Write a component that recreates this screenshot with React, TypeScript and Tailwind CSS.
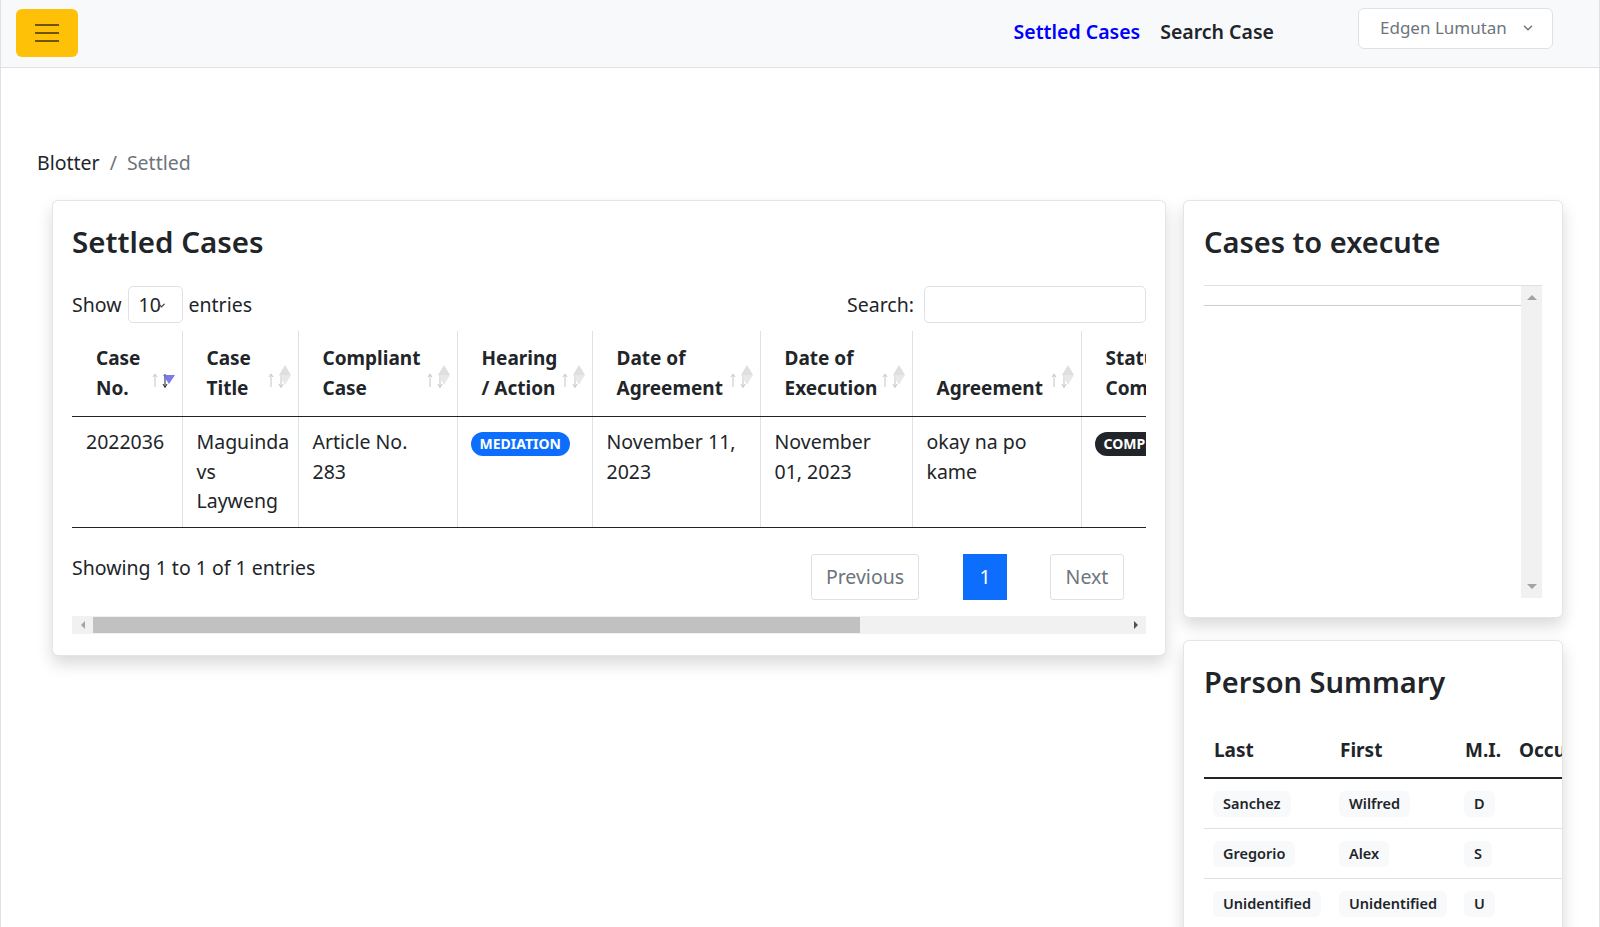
import React from "react";
import { ChevronDown } from "lucide-react";

function SortIcon({ active }: { active?: boolean }) {
  return (
    <svg
      width="24"
      height="26"
      viewBox="0 0 24 26"
      className="absolute right-[6px] bottom-[27px]"
    >
      {/* up arrow */}
      <line x1="3" y1="12" x2="3" y2="24" stroke="#c4c4c4" strokeWidth="1" />
      <path d="M1 14 L3 11 L5 14" fill="none" stroke="#c4c4c4" strokeWidth="1" />
      {/* down arrow */}
      <line x1="13" y1="11" x2="13" y2="24" stroke={active ? "#222" : "#c4c4c4"} strokeWidth="1" />
      <path d="M11 21 L13 24.5 L15 21" fill="none" stroke={active ? "#222" : "#c4c4c4"} strokeWidth="1" />
      {active ? (
        <path d="M11 12 L23 12 L17 21 Z" fill="#6b6be8" opacity="0.9" />
      ) : (
        <>
          <path d="M17 2 L23 12 L11 12 Z" fill="#dcdcdc" opacity="0.9" />
          <path d="M11 12 L23 12 L17 22 Z" fill="#e6e6e6" opacity="0.9" />
        </>
      )}
    </svg>
  );
}

const persons = [
  { last: "Sanchez", first: "Wilfred", mi: "D" },
  { last: "Gregorio", first: "Alex", mi: "S" },
  { last: "Unidentified", first: "Unidentified", mi: "U" },
];

export default function App() {
  return (
    <div className="min-h-screen bg-white border-x border-[#dee2e6] text-[#212529] font-['Noto_Sans',sans-serif]">
      {/* NAVBAR */}
      <nav className="h-[68px] bg-[#f8f9fa] border-b border-[#dee2e6] flex items-center pl-[15px] pr-[46px]">
        <button className="w-[62px] h-[48px] -mt-[2px] bg-[#ffc107] rounded-[6px] flex flex-col items-center justify-center gap-[6px]">
          <span className="block w-[24px] h-[2px] bg-[#705500]" />
          <span className="block w-[24px] h-[2px] bg-[#705500]" />
          <span className="block w-[24px] h-[2px] bg-[#705500]" />
        </button>
        <div className="ml-auto flex items-center">
          <a className="text-[19.5px] font-semibold text-[#0000ff] -mt-[3px]">Settled Cases</a>
          <a className="ml-[20px] text-[19.5px] font-semibold text-[#212529] -mt-[3px]">Search Case</a>
          <button className="ml-[84px] -mt-[11px] w-[195px] h-[41px] bg-white border border-[#dee2e6] rounded-[6px] flex items-center pl-[21px] text-[17px] text-[#6c757d]">
            Edgen Lumutan
            <ChevronDown className="ml-[14px] w-[14px] h-[14px]" strokeWidth={2.5} />
          </button>
        </div>
      </nav>

      <main className="pl-[36px] pr-[36px] pt-[81px]">
        {/* Breadcrumb */}
        <div className="h-[28px] leading-[28px] text-[19.5px] flex items-center">
          <span className="text-[#212529]">Blotter</span>
          <span className="mx-[10px] text-[#6c757d]">/</span>
          <span className="text-[#6c757d]">Settled</span>
        </div>

        <div className="mt-[23px] flex items-start gap-[17px]">
          {/* MAIN CARD */}
          <div className="ml-[15px] w-[1114px] bg-white border border-black/10 rounded-[6px] shadow-[0_0.5rem_1rem_rgba(0,0,0,0.15)] pt-[21px] px-[19px] pb-[21px]">
            <h3 className="h-[40px] leading-[40px] text-[29.5px] font-semibold">Settled Cases</h3>

            <div className="mt-[24px] h-[37px] flex items-center justify-between text-[19.5px]">
              <div className="flex items-center">
                <span>Show</span>
                <div className="ml-[6px] w-[55px] h-[37px] border border-[#dee2e6] rounded-[5px] flex items-center pl-[10px] relative">
                  <span>10</span>
                  <ChevronDown className="absolute left-[27px] top-[13px] w-[11px] h-[11px] text-[#444]" strokeWidth={3} />
                </div>
                <span className="ml-[6px]">entries</span>
              </div>
              <div className="flex items-center">
                <span>Search:</span>
                <div className="ml-[10px] w-[222px] h-[37px] border border-[#dee2e6] rounded-[5px]" />
              </div>
            </div>

            {/* TABLE */}
            <div className="mt-[8px] overflow-hidden">
              <table className="table-fixed border-collapse w-[1149px]">
                <colgroup>
                  <col className="w-[110px]" />
                  <col className="w-[116px]" />
                  <col className="w-[159px]" />
                  <col className="w-[135px]" />
                  <col className="w-[168px]" />
                  <col className="w-[152px]" />
                  <col className="w-[169px]" />
                  <col className="w-[140px]" />
                </colgroup>
                <thead>
                  <tr className="font-bold text-[19px] leading-[30px] text-left">
                    <th className="relative align-bottom pl-[24px] pr-[28px] pt-[12px] pb-[13px] border-b border-b-[#222]">
                      Case<br />No.
                      <SortIcon active />
                    </th>
                    <th className="relative align-bottom pl-[24px] pr-[28px] pt-[12px] pb-[13px] border-b border-b-[#222] border-l border-l-[#dee2e6]">
                      Case<br />Title
                      <SortIcon />
                    </th>
                    <th className="relative align-bottom pl-[24px] pr-[28px] pt-[12px] pb-[13px] border-b border-b-[#222] border-l border-l-[#dee2e6]">
                      Compliant<br />Case
                      <SortIcon />
                    </th>
                    <th className="relative align-bottom pl-[24px] pr-[28px] pt-[12px] pb-[13px] border-b border-b-[#222] border-l border-l-[#dee2e6]">
                      Hearing<br />/ Action
                      <SortIcon />
                    </th>
                    <th className="relative align-bottom pl-[24px] pr-[28px] pt-[12px] pb-[13px] border-b border-b-[#222] border-l border-l-[#dee2e6]">
                      Date of<br />Agreement
                      <SortIcon />
                    </th>
                    <th className="relative align-bottom pl-[24px] pr-[28px] pt-[12px] pb-[13px] border-b border-b-[#222] border-l border-l-[#dee2e6]">
                      Date of<br />Execution
                      <SortIcon />
                    </th>
                    <th className="relative align-bottom pl-[24px] pr-[28px] pt-[12px] pb-[13px] border-b border-b-[#222] border-l border-l-[#dee2e6]">
                      Agreement
                      <SortIcon />
                    </th>
                    <th className="relative align-bottom pl-[24px] pr-[28px] pt-[12px] pb-[13px] border-b border-b-[#222] border-l border-l-[#dee2e6] whitespace-nowrap">
                      Status<br />Compliance
                    </th>
                  </tr>
                </thead>
                <tbody>
                  <tr className="text-[19.5px] leading-[29.5px] text-left align-top">
                    <td className="pl-[14px] pr-[6px] pt-[10px] pb-[11px] border-b border-b-[#222]">2022036</td>
                    <td className="pl-[14px] pr-[6px] pt-[10px] pb-[11px] border-b border-b-[#222] border-l border-l-[#dee2e6] whitespace-nowrap">
                      Maguinda<br />vs<br />Layweng
                    </td>
                    <td className="pl-[14px] pr-[6px] pt-[10px] pb-[11px] border-b border-b-[#222] border-l border-l-[#dee2e6]">
                      Article No.<br />283
                    </td>
                    <td className="pl-[13px] pr-[6px] pt-[10px] pb-[11px] border-b border-b-[#222] border-l border-l-[#dee2e6]">
                      <span className="inline-flex items-center h-[24px] px-[9px] mt-[5px] rounded-full bg-[#0d6efd] text-white text-[14px] font-bold leading-none">
                        MEDIATION
                      </span>
                    </td>
                    <td className="pl-[14px] pr-[6px] pt-[10px] pb-[11px] border-b border-b-[#222] border-l border-l-[#dee2e6] whitespace-nowrap">
                      November 11,<br />2023
                    </td>
                    <td className="pl-[14px] pr-[6px] pt-[10px] pb-[11px] border-b border-b-[#222] border-l border-l-[#dee2e6] whitespace-nowrap">
                      November<br />01, 2023
                    </td>
                    <td className="pl-[14px] pr-[6px] pt-[10px] pb-[11px] border-b border-b-[#222] border-l border-l-[#dee2e6]">
                      okay na po<br />kame
                    </td>
                    <td className="pl-[13px] pr-[6px] pt-[10px] pb-[11px] border-b border-b-[#222] border-l border-l-[#dee2e6] whitespace-nowrap">
                      <span className="inline-flex items-center h-[24px] px-[9px] mt-[5px] rounded-full bg-[#212529] text-white text-[14px] font-bold leading-none">
                        COMPLETED
                      </span>
                    </td>
                  </tr>
                </tbody>
              </table>
            </div>

            {/* FOOTER */}
            <div className="mt-[26px] flex items-start text-[19.5px] pr-[22px]">
              <div className="leading-[28px]">Showing 1 to 1 of 1 entries</div>
              <div className="ml-auto flex items-center">
                <button className="w-[108px] h-[46px] border border-[#dee2e6] rounded-[3px] text-[#6c757d] bg-white">Previous</button>
                <button className="ml-[44px] w-[44px] h-[46px] bg-[#0d6efd] text-white">1</button>
                <button className="ml-[43px] w-[74px] h-[46px] border border-[#dee2e6] rounded-[3px] text-[#6c757d] bg-white">Next</button>
              </div>
            </div>

            {/* horizontal scrollbar */}
            <div className="mt-[16px] h-[18px] bg-[#f1f1f1] flex items-center">
              <div className="w-[21px] flex justify-center">
                <div className="w-0 h-0 border-y-[4px] border-y-transparent border-r-[4px] border-r-[#a3a3a3]" />
              </div>
              <div className="w-[767px] h-[16px] bg-[#c1c1c1]" />
              <div className="ml-auto w-[21px] flex justify-center">
                <div className="w-0 h-0 border-y-[4px] border-y-transparent border-l-[4px] border-l-[#505050]" />
              </div>
            </div>
          </div>

          {/* RIGHT COLUMN */}
          <div className="w-[380px] flex flex-col gap-[22px]">
            <div className="bg-white border border-black/10 rounded-[6px] shadow-[0_0.5rem_1rem_rgba(0,0,0,0.15)] pt-[21px] px-[20px] pb-[19px]">
              <h3 className="h-[40px] leading-[40px] text-[29px] font-semibold">Cases to execute</h3>
              <div className="mt-[23px] h-[313px] border-t border-[#dee2e6] flex">
                <div className="flex-1">
                  <div className="h-[20px] border-b border-[#cccccc]" />
                </div>
                <div className="w-[21px] bg-[#f1f1f1] flex flex-col items-center justify-between pt-[9px] pb-[9px]">
                  <div className="w-0 h-0 border-x-[5px] border-x-transparent border-b-[5px] border-b-[#a3a3a3]" />
                  <div className="w-0 h-0 border-x-[5px] border-x-transparent border-t-[5px] border-t-[#a3a3a3]" />
                </div>
              </div>
            </div>

            <div className="h-[300px] bg-white border border-black/10 rounded-[6px] shadow-[0_0.5rem_1rem_rgba(0,0,0,0.15)] pt-[21px] pl-[20px] overflow-hidden">
              <h3 className="h-[40px] leading-[40px] text-[29px] font-semibold">Person Summary</h3>
              <div className="mt-[21px] overflow-hidden">
                <table className="table-fixed border-collapse w-[420px] text-left">
                  <colgroup>
                    <col className="w-[126px]" />
                    <col className="w-[125px]" />
                    <col className="w-[54px]" />
                    <col className="w-[115px]" />
                  </colgroup>
                  <thead>
                    <tr className="text-[19px] font-bold leading-[28px]">
                      <th className="pl-[10px] pt-[13px] pb-[13px] border-b-2 border-b-[#212529]">Last</th>
                      <th className="pl-[10px] pt-[13px] pb-[13px] border-b-2 border-b-[#212529]">First</th>
                      <th className="pl-[10px] pt-[13px] pb-[13px] border-b-2 border-b-[#212529] whitespace-nowrap">M.I.</th>
                      <th className="pl-[10px] pt-[13px] pb-[13px] border-b-2 border-b-[#212529] whitespace-nowrap">Occupation</th>
                    </tr>
                  </thead>
                  <tbody>
                    {persons.map((p) => (
                      <tr key={p.last + p.mi} className="border-b border-[#dee2e6]">
                        <td className="pl-[9px] pt-[12px] pb-[11px]">
                          <span className="inline-flex items-center h-[26px] px-[10px] rounded-[6px] bg-[#f8f9fa] text-[14.5px] font-semibold">{p.last}</span>
                        </td>
                        <td className="pl-[9px] pt-[12px] pb-[11px]">
                          <span className="inline-flex items-center h-[26px] px-[10px] rounded-[6px] bg-[#f8f9fa] text-[14.5px] font-semibold">{p.first}</span>
                        </td>
                        <td className="pl-[9px] pt-[12px] pb-[11px]">
                          <span className="inline-flex items-center h-[26px] px-[10px] rounded-[6px] bg-[#f8f9fa] text-[14.5px] font-semibold">{p.mi}</span>
                        </td>
                        <td className="pl-[9px] pt-[12px] pb-[11px]" />
                      </tr>
                    ))}
                  </tbody>
                </table>
              </div>
            </div>
          </div>
        </div>
      </main>
    </div>
  );
}
